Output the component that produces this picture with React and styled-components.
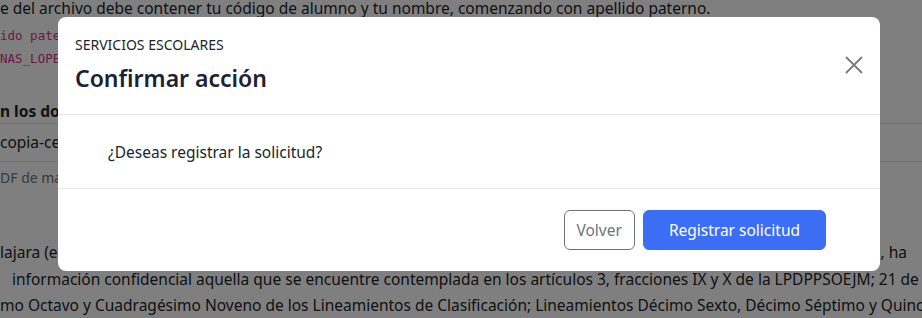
import React from "react";
import styled, { createGlobalStyle } from "styled-components";

const Global = createGlobalStyle`
  html, body { margin: 0; padding: 0; background: #fff; }
  body { font-family: "Noto Sans", "Open Sans", sans-serif; color: #212529; overflow: hidden; width: 922px; height: 318px; }
`;

const Page = styled.div`
  width: 922px;
  height: 318px;
  overflow: hidden;
  position: relative;
`;

const Content = styled.div`
  margin-top: -4px;
  font-size: 15.5px;
  line-height: 24px;
`;

const Line = styled.div`
  white-space: nowrap;
  overflow: hidden;
  padding-left: ${(p) => p.$indent || 0}px;
  height: ${(p) => p.$h || 24}px;
  line-height: ${(p) => p.$h || 24}px;
`;

const Code = styled.div`
  margin-top: 4px;
  font-family: "DejaVu Sans Mono", monospace;
  font-size: 12.5px;
  color: #d63384;
  line-height: 23px;
  white-space: nowrap;
`;

const Bold = styled.div`
  margin-top: 29px;
  font-weight: 700;
  font-size: 15.5px;
  line-height: 24px;
  border-bottom: 1px solid #dee2e6;
  white-space: nowrap;
`;

const Row = styled.div`
  padding: 8px 0;
  line-height: 21px;
  border-bottom: 1px solid #dee2e6;
  white-space: nowrap;
`;

const Small = styled.div`
  margin-top: 6px;
  font-size: 14px;
  color: #6c757d;
  white-space: nowrap;
  line-height: 20px;
`;

const Para = styled.div`
  margin-top: 51px;
  font-size: 15.5px;
  line-height: 26.5px;
`;

const Overlay = styled.div`
  position: absolute;
  inset: 0;
  background: rgba(0, 0, 0, 0.5);
`;

const Modal = styled.div`
  position: absolute;
  left: 58px;
  top: 17px;
  width: 822px;
  background: #fff;
  border-radius: 8px;
  display: flex;
  flex-direction: column;
  overflow: hidden;
`;

const Header = styled.div`
  display: flex;
  align-items: center;
  justify-content: space-between;
  padding: 19px 14px 20px 17px;
  border-bottom: 1px solid #e6e6e6;
`;

const Titles = styled.div`
  display: flex;
  flex-direction: column;
`;

const Kicker = styled.div`
  font-size: 14px;
  line-height: 18px;
  color: #212529;
`;

const Title = styled.div`
  margin-top: 8px;
  font-size: 23px;
  line-height: 32px;
  font-weight: 600;
  color: #1c2233;
`;

const Close = styled.button`
  border: 0;
  background: transparent;
  padding: 0;
  width: 24px;
  height: 24px;
  display: flex;
  align-items: center;
  justify-content: center;
  cursor: pointer;
`;

const Body = styled.div`
  padding: 26px 50px 25px;
  font-size: 15.5px;
  line-height: 22px;
  color: #212529;
  border-bottom: 1px solid #e6e6e6;
`;

const Footer = styled.div`
  display: flex;
  justify-content: flex-end;
  gap: 8px;
  padding: 21px 54px 21px;
`;

const Button = styled.button`
  height: 40px;
  font-family: inherit;
  font-size: 15.5px;
  border-radius: 6px;
  padding: 0 ${(p) => (p.$primary ? 25 : 12)}px;
  border: 1px solid ${(p) => (p.$primary ? "#3b6ef5" : "#6c757d")};
  background: ${(p) => (p.$primary ? "#3b6ef5" : "#fff")};
  color: ${(p) => (p.$primary ? "#fff" : "#6c757d")};
  cursor: pointer;
`;

export default function App() {
  return (
    <>
      <Global />
      <Page>
        <Content>
          <Line>e del archivo debe contener tu código de alumno y tu nombre, comenzando con apellido paterno.</Line>
          <Code>
            <div>ido paterno_Apellido materno_Nombre(s)</div>
            <div>NAS_LOPEZ_JUAN</div>
          </Code>
          <Bold>n los documentos</Bold>
          <Row>copia-certificada.pdf</Row>
          <Small>DF de máximo 2 MB.</Small>
          <Para>
            <Line $h={26.5}>lajara (en adelante la Universidad), con domicilio en Avenida Juárez 976, colonia Centro, postal 44100, Guadalajara, Jalisco, ha</Line>
            <Line $h={26.5} $indent={12}>información confidencial aquella que se encuentre contemplada en los artículos 3, fracciones IX y X de la LPDPPSOEJM; 21 de la</Line>
            <Line $h={26.5}>mo Octavo y Cuadragésimo Noveno de los Lineamientos de Clasificación; Lineamientos Décimo Sexto, Décimo Séptimo y Quincuagésimo</Line>
          </Para>
        </Content>
        <Overlay />
        <Modal role="dialog">
          <Header>
            <Titles>
              <Kicker>SERVICIOS ESCOLARES</Kicker>
              <Title>Confirmar acción</Title>
            </Titles>
            <Close aria-label="Cerrar">
              <svg width="18" height="18" viewBox="0 0 18 18">
                <path d="M1.5 1.5 L16.5 16.5 M16.5 1.5 L1.5 16.5" stroke="#7a7a7a" strokeWidth="1.8" strokeLinecap="round" />
              </svg>
            </Close>
          </Header>
          <Body>¿Deseas registrar la solicitud?</Body>
          <Footer>
            <Button>Volver</Button>
            <Button $primary>Registrar solicitud</Button>
          </Footer>
        </Modal>
      </Page>
    </>
  );
}
